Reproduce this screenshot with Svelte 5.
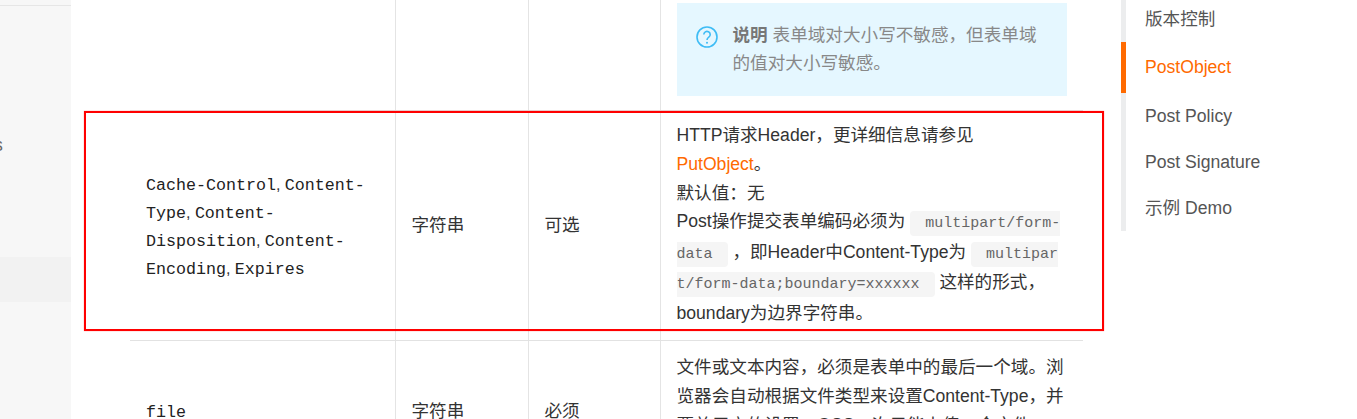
<script lang="ts">
  // Right-hand outline of the doc page; the first entry is cut by the viewport.
  const toc = [
    { label: "版本控制", cls: "first" },
    { label: "PostObject", cls: "active" },
    { label: "Post Policy", cls: "" },
    { label: "Post Signature", cls: "" },
    { label: "示例 Demo", cls: "" },
  ];
  const headers = ["Cache-Control", "Content-Type", "Content-Disposition", "Content-Encoding", "Expires"];
</script>

<div class="page">
  <aside class="side">
    <div class="side-top"></div>
    <div class="side-item"><span>s</span></div>
    <div class="side-current"></div>
  </aside>

  <main class="content">
    <table>
      <colgroup>
        <col class="c-name" />
        <col class="c-type" />
        <col class="c-req" />
        <col />
      </colgroup>
      <tbody>
        <tr>
          <td></td>
          <td></td>
          <td></td>
          <td class="note-cell">
            <div class="note">
              <svg class="note-icon" viewBox="0 0 24 24" width="24" height="24" aria-hidden="true">
                <circle cx="12" cy="12" r="10" fill="none" stroke="#3ebcf5" stroke-width="1.6" />
                <path d="M8.8 9.6a3.2 3.2 0 1 1 5 2.6c-1.1.8-1.8 1.3-1.8 2.8" fill="none" stroke="#3ebcf5" stroke-width="1.6" />
                <circle cx="12" cy="17.8" r="1" fill="#3ebcf5" />
              </svg>
              <p><strong>说明</strong> 表单域对大小写不敏感，但表单域的值对大小写敏感。</p>
            </div>
          </td>
        </tr>
        <tr>
          <td class="name">
            {#each headers as h, i}<code>{h}</code>{#if i < headers.length - 1}<span class="sep">{", "}</span>{/if}{/each}
          </td>
          <td>字符串</td>
          <td>可选</td>
          <td class="desc">
            HTTP请求Header，更详细信息请参见<br />
            <a href="#putobject">PutObject</a>。<br />
            默认值：无<br />
            Post操作提交表单编码必须为 <code class="inline">multipart/form-data</code> ，即Header中Content-Type为 <code class="inline">multipart/form-data;boundary=xxxxxx</code> 这样的形式，boundary为边界字符串。
          </td>
        </tr>
        <tr>
          <td class="name"><code>file</code></td>
          <td>字符串</td>
          <td>必须</td>
          <td class="desc last">
            文件或文本内容，必须是表单中的最后一个域。浏览器会自动根据文件类型来设置Content-Type，并覆盖用户的设置。OSS一次只能上传一个文件。<br />
            默认值：无
          </td>
        </tr>
      </tbody>
    </table>
  </main>

  <nav class="toc">
    {#each toc as item}
      <div class="toc-item {item.cls}">{item.label}</div>
    {/each}
  </nav>

  <div class="mark"></div>
</div>

<style>
  :global(body) {
    margin: 0;
    background: #fff;
  }
  .page {
    position: relative;
    display: flex;
    height: 419px;
    overflow: hidden;
    font-family: "Liberation Sans", "Noto Sans CJK SC", sans-serif;
    font-size: 17.6px;
    color: #333;
  }
  .side {
    flex: none;
    width: 71px;
    background: #f7f7f7;
    overflow: hidden;
  }
  .side-top {
    height: 5px;
    border-bottom: 1px solid #e6e6e6;
  }
  .side-item {
    margin-top: 126px;
    height: 26px;
    line-height: 26px;
    color: #666;
  }
  .side-item span {
    display: block;
    margin-left: -6px;
  }
  .side-current {
    margin-top: 99px;
    height: 45px;
    background: #f2f2f2;
  }
  .content {
    flex: none;
    width: 953px;
    margin-left: 59px;
  }
  table {
    width: 953px;
    table-layout: fixed;
    border-collapse: collapse;
  }
  .c-name {
    width: 265px;
  }
  .c-type {
    width: 133px;
  }
  .c-req {
    width: 132px;
  }
  td {
    padding: 10px 16px;
    line-height: 28.8px;
    border-bottom: 1px solid #e2e2e2;
    border-right: 1px solid #e4e4e4;
    vertical-align: middle;
    word-break: break-word;
  }
  td:last-child {
    border-right: 0;
  }
  .note-cell {
    padding: 3px 16px 14px;
  }
  .note {
    display: flex;
    gap: 14px;
    align-items: flex-start;
    height: 93px;
    box-sizing: border-box;
    padding: 19px 30px 0 18px;
    background: #e5f7ff;
    color: #888;
  }
  .note-icon {
    flex: none;
    margin-top: 3px;
  }
  .note p {
    margin: 0;
    line-height: 27.5px;
  }
  .note strong {
    color: #777;
  }
  .name {
    line-height: 28px;
  }
  .name code {
    font-family: "Liberation Mono", monospace;
    font-size: 16.67px;
    line-height: 1;
    color: #222;
  }
  .sep {
    font-size: 16px;
    line-height: 1;
  }
  .desc {
    line-height: 28.8px;
    padding-bottom: 13px;
  }
  .desc.last {
    padding: 12px 16px;
  }
  .desc a {
    color: #ff6a00;
    text-decoration: none;
  }
  .inline {
    padding: 4px 15px;
    border-radius: 4px;
    background: #f5f5f5;
    color: #666;
    font-family: "Liberation Mono", monospace;
    font-size: 15px;
    line-height: 27.4px;
    word-break: break-all;
  }
  .toc {
    flex: none;
    width: 231px;
    height: 231px;
    margin-left: 38px;
    border-left: 5px solid #ecedee;
    box-sizing: border-box;
    color: #555;
  }
  .toc-item {
    height: 46px;
    line-height: 46px;
    margin-left: -5px;
    padding-left: 24px;
  }
  .toc-item.first {
    height: 42px;
    line-height: 38px;
  }
  .toc-item.active {
    height: 51px;
    line-height: 51px;
    border-left: 5px solid #ff6a00;
    padding-left: 19px;
    color: #ff6a00;
  }
  .mark {
    position: absolute;
    left: 84px;
    top: 111px;
    width: 1020px;
    height: 220px;
    box-sizing: border-box;
    border: 2px solid #f00;
    box-shadow: 0 0 1px rgba(255, 0, 0, 0.5);
    pointer-events: none;
  }
</style>
